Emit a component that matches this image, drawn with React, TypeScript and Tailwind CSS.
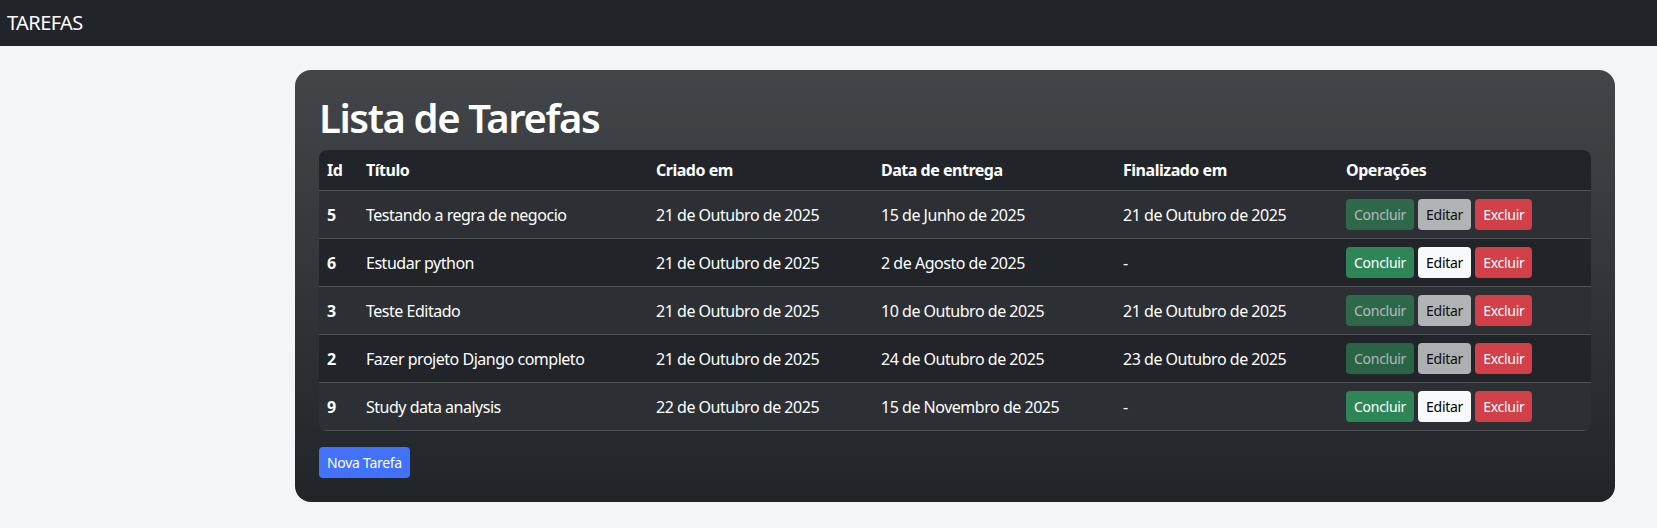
import React from 'react';

interface Task {
  id: number;
  title: string;
  created: string;
  due: string;
  done: string;
}

const tasks: Task[] = [
  { id: 5, title: 'Testando a regra de negocio', created: '21 de Outubro de 2025', due: '15 de Junho de 2025', done: '21 de Outubro de 2025' },
  { id: 6, title: 'Estudar python', created: '21 de Outubro de 2025', due: '2 de Agosto de 2025', done: '-' },
  { id: 3, title: 'Teste Editado', created: '21 de Outubro de 2025', due: '10 de Outubro de 2025', done: '21 de Outubro de 2025' },
  { id: 2, title: 'Fazer projeto Django completo', created: '21 de Outubro de 2025', due: '24 de Outubro de 2025', done: '23 de Outubro de 2025' },
  { id: 9, title: 'Study data analysis', created: '22 de Outubro de 2025', due: '15 de Novembro de 2025', done: '-' },
];

function Operations({ finished }: { finished: boolean }) {
  const off = finished ? 'opacity-65' : '';
  return (
    <div className="flex gap-1">
      <button className={`h-[31px] px-2 rounded-[4px] bg-[#2e8657] text-white text-[14px] tracking-[-0.02em] ${off}`}>Concluir</button>
      <button className={`h-[31px] px-2 rounded-[4px] bg-[#f8f9fa] text-[#000] text-[14px] tracking-[-0.02em] ${off}`}>Editar</button>
      <button className="h-[31px] px-2 rounded-[4px] bg-[#d2404a] text-white text-[14px] tracking-[-0.02em]">Excluir</button>
    </div>
  );
}

export default function App() {
  return (
    <div className="min-h-[528px] bg-[#f4f5f8] font-['Noto_Sans',sans-serif]">
      <nav className="h-[46px] bg-[#212529] flex items-center pl-[7px]">
        <span className="text-[20px] text-white leading-none tracking-[-0.03em]">TAREFAS</span>
      </nav>

      <div className="ml-[295px] mt-6 w-[1320px] rounded-2xl p-6 bg-[#212529] bg-[linear-gradient(180deg,rgba(255,255,255,0.15),rgba(255,255,255,0))] text-white">
        <h1 className="text-[40px] font-semibold leading-[1.2] mb-2 tracking-[-0.035em]">Lista de Tarefas</h1>

        <div className="rounded-lg overflow-hidden">
          <table className="w-full table-fixed border-collapse text-[16px] tracking-[-0.03em]">
            <colgroup>
              <col className="w-[39px]" />
              <col className="w-[290px]" />
              <col className="w-[225px]" />
              <col className="w-[242px]" />
              <col className="w-[223px]" />
              <col />
            </colgroup>
            <thead>
              <tr className="bg-[#212529] border-b border-[#4d5154]">
                {['Id', 'Título', 'Criado em', 'Data de entrega', 'Finalizado em', 'Operações'].map((h) => (
                  <th key={h} className="px-2 py-2 text-left font-bold leading-6 align-middle">{h}</th>
                ))}
              </tr>
            </thead>
            <tbody>
              {tasks.map((t, i) => (
                <tr
                  key={t.id}
                  className={`border-b border-[#4d5154] ${i % 2 === 0 ? 'bg-[#2c3034]' : 'bg-[#212529]'}`}
                >
                  <td className="px-2 py-2 font-bold align-middle">{t.id}</td>
                  <td className="px-2 py-2 align-middle whitespace-nowrap">{t.title}</td>
                  <td className="px-2 py-2 align-middle whitespace-nowrap">{t.created}</td>
                  <td className="px-2 py-2 align-middle whitespace-nowrap">{t.due}</td>
                  <td className="px-2 py-2 align-middle whitespace-nowrap">{t.done}</td>
                  <td className="px-2 py-2 align-middle">
                    <Operations finished={t.done !== '-'} />
                  </td>
                </tr>
              ))}
            </tbody>
          </table>
        </div>

        <button className="mt-4 h-[31px] px-2 rounded-[4px] bg-[#4271fb] text-white text-[14px] tracking-[-0.02em]">Nova Tarefa</button>
      </div>
    </div>
  );
}
